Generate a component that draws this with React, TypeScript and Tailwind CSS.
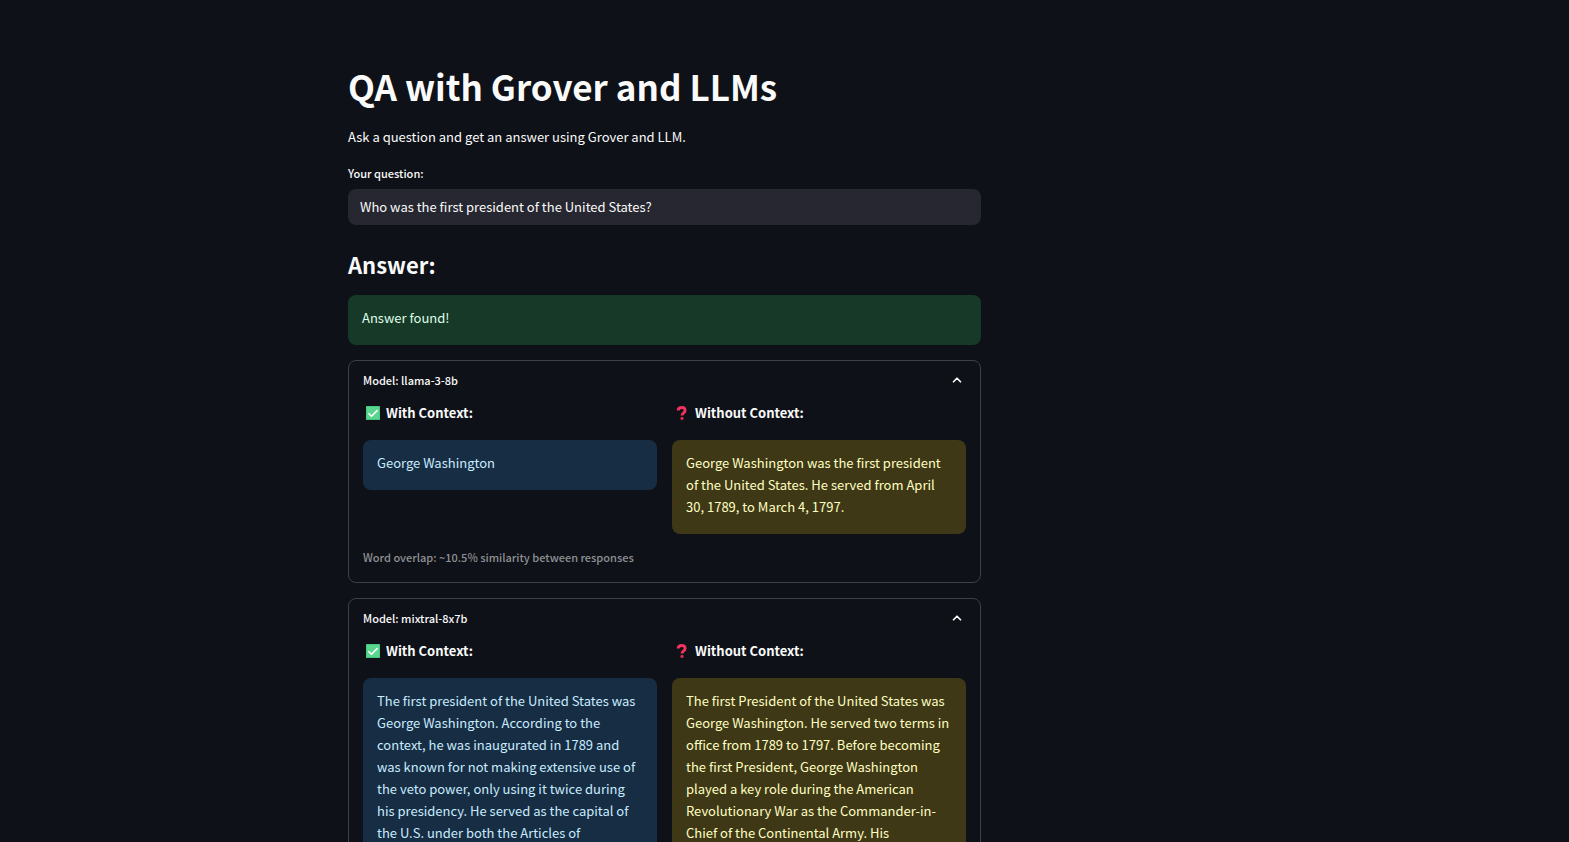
import { ChevronUp } from "lucide-react";

type Comparison = {
  model: string;
  withContext: string;
  withoutContext: string;
  overlap?: string;
};

const comparisons: Comparison[] = [
  {
    model: "llama-3-8b",
    withContext: "George Washington",
    withoutContext:
      "George Washington was the first president of the United States. He served from April 30, 1789, to March 4, 1797.",
    overlap: "Word overlap: ~10.5% similarity between responses",
  },
  {
    model: "mixtral-8x7b",
    withContext:
      "The first president of the United States was George Washington. According to the context, he was inaugurated in 1789 and was known for not making extensive use of the veto power, only using it twice during his presidency. He served as the capital of the U.S. under both the Articles of",
    withoutContext:
      "The first President of the United States was George Washington. He served two terms in office from 1789 to 1797. Before becoming the first President, George Washington played a key role during the American Revolutionary War as the Commander-in-Chief of the Continental Army. His",
  },
];

function CheckMark() {
  return (
    <svg viewBox="0 0 14 14" className="ml-[3px] h-3.5 w-3.5" aria-hidden="true">
      <rect width="14" height="14" rx="0.6" fill="#44c47d" />
      <rect x="0.7" y="0.7" width="12.6" height="12.4" rx="0.4" fill="#58d68d" />
      <path d="M2.4 7.2 5.5 10.2 11.6 4.1" fill="none" stroke="#fff" strokeWidth="1.6" />
    </svg>
  );
}

function QuestionMark() {
  return (
    <svg viewBox="0 0 14 14" className="ml-[3px] h-3.5 w-3.5" aria-hidden="true">
      <path
        d="M3.2 4.6C3.2 2.4 4.6 1.5 6.6 1.5c2.2 0 3.5 1.1 3.5 2.9 0 2.7-3 2.4-3 5.1"
        fill="none"
        stroke="#f4315f"
        strokeWidth="2.9"
      />
      <circle cx="7" cy="12.4" r="1.6" fill="#e02c50" />
    </svg>
  );
}

function ModelPanel({ model, withContext, withoutContext, overlap }: Comparison) {
  return (
    <details open className="rounded-lg border border-[#3e4046] px-3.5 pb-[15px]">
      <summary className="flex h-[41px] cursor-pointer list-none items-center justify-between pb-[3px] text-[11px] leading-5 font-medium">
        <span>Model: {model}</span>
        <ChevronUp className="mr-0.5 h-3.5 w-3.5" strokeWidth={3} />
      </summary>
      <div className="grid grid-cols-2 gap-[15px]">
        <section className="flex flex-col items-start gap-4">
          <h3 className="flex items-center gap-1.5 text-[13px] leading-[22px] font-bold">
            <CheckMark />
            With Context:
          </h3>
          <p className="w-full rounded-lg bg-[#172d43] px-3.5 pt-3 pb-4 text-[13px] leading-[22px] text-[#c7ebff]">
            {withContext}
          </p>
        </section>
        <section className="flex flex-col items-start gap-4">
          <h3 className="flex items-center gap-1.5 text-[13px] leading-[22px] font-bold">
            <QuestionMark />
            Without Context:
          </h3>
          <p className="w-full rounded-lg bg-[#3e3816] px-3.5 pt-3 pb-4 text-[13px] leading-[22px] text-[#ffffc2]">
            {withoutContext}
          </p>
        </section>
      </div>
      {overlap && (
        <p className="mt-[13px] text-[11px] leading-5 font-medium text-[#8f9093]">{overlap}</p>
      )}
    </details>
  );
}

export default function App() {
  return (
    <div className="h-screen overflow-y-auto bg-[#0e1117] pr-60 font-['Noto_Sans_CJK_SC',sans-serif] text-[#fafafa] [scrollbar-width:none]">
      <main className="mx-auto flex max-w-[633px] flex-col pt-[62px] pb-20">
        <h1 className="text-[35px] leading-[48px] font-bold">QA with Grover and LLMs</h1>
        <p className="mt-4 text-[13px] leading-[22px]">
          Ask a question and get an answer using Grover and LLM.
        </p>
        <label htmlFor="question" className="mt-[15px] text-[11px] leading-5 font-medium">
          Your question:
        </label>
        <input
          id="question"
          type="text"
          defaultValue="Who was the first president of the United States?"
          className="mt-1.5 h-9 w-full rounded-lg bg-[#262730] px-3 pb-0.5 text-[13px] outline-none"
        />
        <h2 className="mt-[23px] text-[22px] leading-8 font-bold">Answer:</h2>
        <p
          role="status"
          className="mt-[15px] rounded-lg bg-[#173928] px-3.5 pt-3 pb-4 text-[13px] leading-[22px] text-[#dffde9]"
        >
          Answer found!
        </p>
        <div className="mt-[15px] flex flex-col gap-[15px]">
          {comparisons.map((item) => (
            <ModelPanel key={item.model} {...item} />
          ))}
        </div>
      </main>
    </div>
  );
}
